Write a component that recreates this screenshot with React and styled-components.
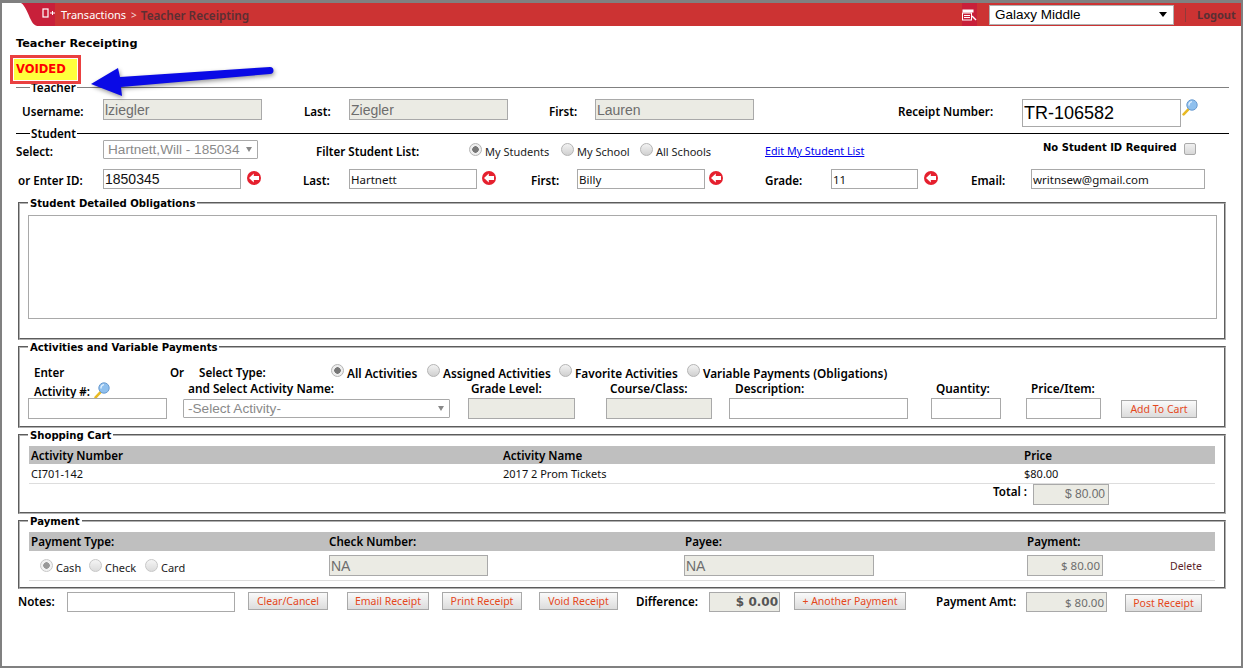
import React from "react";
import styled, { createGlobalStyle } from "styled-components";

const GlobalStyle = createGlobalStyle`
  html, body {
    margin: 0;
    padding: 0;
    background: #fff;
    font-family: "Noto Sans", "Open Sans", sans-serif;
    font-size: 11px;
    color: #000;
  }
`;

// small drawings
const BackArrow = () => (
  <ArrowIcon viewBox="0 0 14 14">
    <circle cx="7" cy="7" r="7" fill="#e5202e" />
    <path d="M2 7 L6.8 2.6 V5 H12 V9 H6.8 V11.4 Z" fill="#fff" />
  </ArrowIcon>
);

const Magnifier = () => (
  <MagIcon viewBox="0 0 16 17">
    <path d="M6.6 10.2 L1.6 15.4" stroke="#e8b923" strokeWidth="2.6" strokeLinecap="round" />
    <circle cx="10" cy="6" r="5.2" fill="#8fc0ee" stroke="#6a9bd0" strokeWidth="1" />
    <path d="M7 6.5 A3.4 3.4 0 0 1 10 2.6" stroke="#e4f2ff" strokeWidth="1.4" fill="none" />
  </MagIcon>
);

const Radio = ({ w, checked, disabled, children }) => (
  <RadioOption $w={w}>
    <RadioInput type="radio" defaultChecked={checked} disabled={disabled} />
    <span>{children}</span>
  </RadioOption>
);

export default function App() {
  return (
    <Frame>
      <GlobalStyle />
      <TopBar>
        <BarLeft>
          <Notch viewBox="0 0 52 23" preserveAspectRatio="none">
            <rect width="52" height="23" fill="#c8203a" />
            <path d="M0 0 H18 C22 2 25 11 28 17 C30 21 32 23 36 23 H0 Z" fill="#fff" />
            <rect x="40" y="6" width="5" height="8" fill="none" stroke="#fff" strokeWidth="1.2" />
            <path d="M47 10 H52 M49.5 8 V12" stroke="#fff" strokeWidth="1" />
          </Notch>
          <Crumb>Transactions</Crumb>
          <CrumbSep>&gt;</CrumbSep>
          <CrumbCurrent>Teacher Receipting</CrumbCurrent>
        </BarLeft>
        <BarRight>
          <ReportBlock>
            <svg viewBox="0 0 15 12" width="15" height="12">
              <rect x="0.5" y="0.5" width="11" height="3" fill="#fff" />
              <rect x="0.5" y="4" width="9" height="7" fill="none" stroke="#fff" />
              <path d="M2 6.5 H8 M2 8.5 H8" stroke="#fff" />
              <path d="M10 7 L14 11" stroke="#fff" strokeWidth="1.4" />
            </svg>
          </ReportBlock>
          <SchoolSelect>
            <span>Galaxy Middle</span>
            <SchoolCaret />
          </SchoolSelect>
          <BarDivider />
          <Logout>Logout</Logout>
        </BarRight>
      </TopBar>

      <Main>
        <PageTitle>Teacher Receipting</PageTitle>
        <Voided>VOIDED</Voided>
        <PointerArrow viewBox="0 0 190 36">
          <path
            d="M0 20 L27 4 L29 13 L179 3 A3.4 3.4 0 0 1 179 10 L30 23 L31 32 Z"
            fill="#0a0ae6"
          />
        </PointerArrow>

        <Section $color="#808080">
          <SectionLegend>Teacher</SectionLegend>
          <TeacherRow>
            <FieldLabel>Username:</FieldLabel>
            <TextInput $w={159} disabled readOnly value="lziegler" />
            <FieldLabel>Last:</FieldLabel>
            <TextInput $w={159} disabled readOnly value="Ziegler" />
            <FieldLabel>First:</FieldLabel>
            <TextInput $w={159} disabled readOnly value="Lauren" />
            <FieldLabel>Receipt Number:</FieldLabel>
            <ReceiptInput readOnly value="TR-106582" />
            <Magnifier />
          </TeacherRow>
        </Section>

        <Section $color="#000" $gap>
          <SectionLegend>Student</SectionLegend>
          <SelectRow>
            <FieldLabel>Select:</FieldLabel>
            <FakeSelect $w={155} $h={19}>
              <span>Hartnett,Will - 185034</span>
              <SmallCaret />
            </FakeSelect>
            <FieldLabel>Filter Student List:</FieldLabel>
            <RadioGroup>
              <Radio w={92} checked>My Students</Radio>
              <Radio w={79}>My School</Radio>
              <Radio>All Schools</Radio>
            </RadioGroup>
            <EditLink href="#">Edit My Student List</EditLink>
            <NoIdWrap>
              <NoIdLabel>No Student ID Required</NoIdLabel>
              <CheckBox type="checkbox" />
            </NoIdWrap>
          </SelectRow>
          <IdRow>
            <FieldLabel>or Enter ID:</FieldLabel>
            <PlainInput $w={138} $big readOnly value="1850345" />
            <BackArrow />
            <FieldLabel>Last:</FieldLabel>
            <PlainInput $w={128} readOnly value="Hartnett" />
            <BackArrow />
            <FieldLabel>First:</FieldLabel>
            <PlainInput $w={128} readOnly value="Billy" />
            <BackArrow />
            <FieldLabel>Grade:</FieldLabel>
            <PlainInput $w={87} readOnly value="11" />
            <BackArrow />
            <FieldLabel>Email:</FieldLabel>
            <PlainInput $w={174} readOnly value="writnsew@gmail.com" />
          </IdRow>
        </Section>

        <Panel $h={144} $mt={7}>
          <PanelLegend>Student Detailed Obligations</PanelLegend>
          <ObligationBox />
        </Panel>

        <Panel $h={88}>
          <PanelLegend>Activities and Variable Payments</PanelLegend>
          <TypeRow>
            <TypeLabel $w={142} $left={6}>Enter</TypeLabel>
            <TypeLabel $w={29}>Or</TypeLabel>
            <TypeLabel $w={132}>Select Type:</TypeLabel>
            <ActivityRadios>
              <Radio w={96} checked>All Activities</Radio>
              <Radio w={132}>Assigned Activities</Radio>
              <Radio w={128}>Favorite Activities</Radio>
              <Radio>Variable Payments (Obligations)</Radio>
            </ActivityRadios>
          </TypeRow>
          <ActivityLabels>
            <ActivityNum>
              <FieldLabel>Activity #:</FieldLabel>
              <Magnifier />
            </ActivityNum>
            <FieldLabel>and Select Activity Name:</FieldLabel>
            <FieldLabel>Grade Level:</FieldLabel>
            <FieldLabel>Course/Class:</FieldLabel>
            <FieldLabel>Description:</FieldLabel>
            <FieldLabel>Quantity:</FieldLabel>
            <FieldLabel>Price/Item:</FieldLabel>
          </ActivityLabels>
          <ActivityInputs>
            <PlainInput $w={139} $h={21} readOnly value="" />
            <FakeSelect $w={267} $h={19}>
              <span>-Select Activity-</span>
              <SmallCaret />
            </FakeSelect>
            <TextInput $w={107} $h={21} disabled readOnly value="" />
            <TextInput $w={106} $h={21} disabled readOnly value="" />
            <PlainInput $w={179} $h={21} readOnly value="" />
            <PlainInput $w={70} $h={21} readOnly value="" />
            <PlainInput $w={75} $h={21} readOnly value="" />
            <ActionButton $w={76}>Add To Cart</ActionButton>
          </ActivityInputs>
        </Panel>

        <Panel $h={86}>
          <PanelLegend>Shopping Cart</PanelLegend>
          <CartTable>
            <thead>
              <tr>
                <CartHead $w={472}>Activity Number</CartHead>
                <CartHead $w={521}>Activity Name</CartHead>
                <CartHead>Price</CartHead>
              </tr>
            </thead>
            <tbody>
              <tr>
                <CartCell>CI701-142</CartCell>
                <CartCell>2017 2 Prom Tickets</CartCell>
                <CartCell>$80.00</CartCell>
              </tr>
            </tbody>
          </CartTable>
          <TotalRow>
            <FieldLabel>Total :</FieldLabel>
            <AmountInput $w={76} disabled readOnly value="$ 80.00" />
          </TotalRow>
        </Panel>

        <Panel $h={75}>
          <PanelLegend>Payment</PanelLegend>
          <PayHeader>
            <span>Payment Type:</span>
            <span>Check Number:</span>
            <span>Payee:</span>
            <span>Payment:</span>
          </PayHeader>
          <PayRow>
            <PayRadios>
              <Radio w={49} checked disabled>Cash</Radio>
              <Radio w={56} disabled>Check</Radio>
              <Radio disabled>Card</Radio>
            </PayRadios>
            <TextInput $w={159} $h={21} disabled readOnly value="NA" />
            <TextInput $w={190} $h={21} disabled readOnly value="NA" />
            <SmallAmount $w={76} $h={21} disabled readOnly value="$ 80.00" />
            <DeleteLink>Delete</DeleteLink>
          </PayRow>
        </Panel>

        <BottomRow>
          <FieldLabel>Notes:</FieldLabel>
          <PlainInput $w={168} $h={20} readOnly value="" />
          <ActionButton $w={80}>Clear/Cancel</ActionButton>
          <ActionButton $w={82}>Email Receipt</ActionButton>
          <ActionButton $w={80}>Print Receipt</ActionButton>
          <ActionButton $w={79}>Void Receipt</ActionButton>
          <FieldLabel>Difference:</FieldLabel>
          <DiffInput disabled readOnly value="$ 0.00" />
          <ActionButton $w={112}>+ Another Payment</ActionButton>
          <FieldLabel>Payment Amt:</FieldLabel>
          <SmallAmount $w={81} $h={20} disabled readOnly value="$ 80.00" />
          <PostButton $w={77}>Post Receipt</PostButton>
        </BottomRow>
      </Main>
    </Frame>
  );
}

const Frame = styled.div`
  box-sizing: border-box;
  width: 1243px;
  height: 668px;
  border: solid #808080;
  border-width: 3px 2px 2px 2px;
  overflow: hidden;
  background: #fff;
`;

const TopBar = styled.div`
  height: 23px;
  margin-left: 1px;
  background: #cc3333;
  display: flex;
  justify-content: space-between;
  align-items: center;
`;

const BarLeft = styled.div`
  display: flex;
  align-items: center;
  height: 100%;
`;

const Notch = styled.svg`
  width: 52px;
  height: 23px;
  display: block;
`;

const Crumb = styled.span`
  margin-left: 6px;
  color: #fff;
  font-size: 11px;
`;

const CrumbSep = styled.span`
  margin: 0 4px 0 5px;
  color: #f4d9d9;
  font-size: 10px;
`;

const CrumbCurrent = styled.span`
  color: #5a2f33;
  font-size: 11.7px;
  font-weight: 600;
`;

const BarRight = styled.div`
  display: flex;
  align-items: center;
  height: 100%;
`;

const ReportBlock = styled.div`
  width: 15px;
  height: 100%;
  margin-right: 12px;
  background: #c8203a;
  display: flex;
  align-items: center;
  justify-content: center;
`;

const SchoolSelect = styled.div`
  box-sizing: border-box;
  width: 185px;
  height: 20px;
  padding: 0 6px 0 5px;
  background: #fff;
  border: 1px solid #b0b0b0;
  display: flex;
  align-items: center;
  justify-content: space-between;
  font-family: "Liberation Sans", Arial, sans-serif;
  font-size: 13.5px;
`;

const SchoolCaret = styled.i`
  border: 4px solid transparent;
  border-top: 5px solid #000;
  border-bottom: 0;
`;

const BarDivider = styled.i`
  width: 1px;
  height: 14px;
  margin: 0 11px;
  background: #8f3a3a;
`;

const Logout = styled.span`
  width: 44px;
  color: #5a2f33;
  font-size: 11px;
  font-weight: 700;
`;

const Main = styled.div`
  position: relative;
  padding: 0 12px 0 14px;
`;

const PageTitle = styled.div`
  height: 14px;
  margin-top: 10px;
  font-family: "DejaVu Sans", sans-serif;
  font-size: 11.3px;
  font-weight: 700;
  line-height: 16px;
`;

const Voided = styled.div`
  position: relative;
  z-index: 1;
  box-sizing: border-box;
  width: 71px;
  height: 29px;
  margin: 5px 0 -4px -6px;
  padding-left: 3px;
  border: 3px solid #ea4040;
  outline: 1px solid #fff;
  outline-offset: -4px;
  background: #ffff3c;
  color: #f00;
  font-family: "DejaVu Sans", sans-serif;
  font-size: 11.5px;
  font-weight: 700;
  line-height: 22px;
`;

const PointerArrow = styled.svg`
  position: absolute;
  z-index: 2;
  left: 89px;
  top: 28px;
  width: 190px;
  height: 36px;
  filter: drop-shadow(1px 2px 2px rgba(0, 0, 0, 0.4));
`;

const Section = styled.fieldset`
  min-width: 0;
  margin: ${(props) => (props.$gap ? "-1px" : "0")} 0 0;
  padding: 0;
  border: 0;
  border-top: 1px solid ${(props) => props.$color};
`;

const SectionLegend = styled.legend`
  margin-left: 14px;
  padding: 0 1px;
  font-size: 11.7px;
  font-weight: 600;
  line-height: 14px;
`;

const TeacherRow = styled.div`
  display: grid;
  grid-template-columns: 81px 201px 45px 200px 46px 303px 124px 160px 16px;
  align-items: start;
  margin: 5px 0 0 6px;
  & label {
    line-height: 25px;
  }
  & svg {
    margin-top: 0;
  }
`;

const SelectRow = styled.div`
  display: grid;
  grid-template-columns: 87px 213px 153px 296px 278px 1fr;
  align-items: center;
  & > label {
    padding-top: 3px;
  }
`;

const IdRow = styled.div`
  display: grid;
  grid-template-columns: 85px 144px 56px 46px 133px 49px 46px 132px 56px 66px 93px 47px 60px 174px;
  align-items: center;
  margin: 10px 0 0 2px;
  & > label {
    padding-top: 2px;
  }
`;

const FieldLabel = styled.label`
  font-size: 11.6px;
  font-weight: 600;
  white-space: nowrap;
`;

const inputBase = `
  box-sizing: border-box;
  padding: 0 1px;
  border: 1px solid #a9a9a9;
  outline: none;
  display: block;
`;

const TextInput = styled.input`
  ${inputBase}
  width: ${(props) => props.$w}px;
  height: ${(props) => props.$h || 21}px;
  background: #ebebe4;
  color: #6d6d6d;
  font-family: "Liberation Sans", Arial, sans-serif;
  font-size: 14px;
  &:disabled {
    color: #6d6d6d;
  }
`;

const PlainInput = styled.input`
  ${inputBase}
  width: ${(props) => props.$w}px;
  height: ${(props) => props.$h || 20}px;
  background: #fff;
  color: #111;
  font-family: ${(props) =>
    props.$big ? '"Liberation Sans", Arial, sans-serif' : '"Noto Sans", sans-serif'};
  font-size: ${(props) => (props.$big ? "14px" : "11.5px")};
`;

const ReceiptInput = styled.input`
  ${inputBase}
  width: 159px;
  height: 28px;
  background: #fff;
  color: #000;
  font-family: "Liberation Sans", Arial, sans-serif;
  font-size: 18px;
`;

const AmountInput = styled(TextInput)`
  padding-right: 3px;
  text-align: right;
  font-size: 12px;
`;

const SmallAmount = styled(TextInput)`
  padding-right: 2px;
  text-align: right;
  font-family: "Noto Sans", sans-serif;
  font-size: 11.5px;
`;

const DiffInput = styled(TextInput)`
  width: 71px;
  height: 20px;
  padding-right: 1px;
  text-align: right;
  font-family: "DejaVu Sans", sans-serif;
  font-size: 12px;
  font-weight: 700;
  &:disabled {
    color: #555;
  }
`;

const FakeSelect = styled.div`
  box-sizing: border-box;
  width: ${(props) => props.$w}px;
  height: ${(props) => props.$h}px;
  padding: 0 5px 0 4px;
  border: 1px solid #a9a9a9;
  border-radius: 1px;
  background: #fff;
  color: #8a8a8a;
  display: flex;
  align-items: center;
  justify-content: space-between;
  font-family: "Liberation Sans", Arial, sans-serif;
  font-size: 13.6px;
  white-space: nowrap;
`;

const SmallCaret = styled.i`
  border: 3px solid transparent;
  border-top: 5px solid #888;
  border-bottom: 0;
`;

const RadioGroup = styled.div`
  display: flex;
  align-items: center;
  margin-top: 3px;
`;

const RadioOption = styled.label`
  width: ${(props) => (props.$w ? `${props.$w}px` : "auto")};
  display: flex;
  align-items: center;
  gap: 3px;
  color: #222;
  font-size: 11px;
  white-space: nowrap;
`;

const RadioInput = styled.input`
  appearance: none;
  box-sizing: border-box;
  width: 13px;
  height: 13px;
  margin: -4px 0 0;
  flex: none;
  border: 1px solid #b4b4b4;
  border-radius: 50%;
  background: linear-gradient(#f2f2f2, #d0d0d0);
  &:checked {
    background: radial-gradient(circle, #777 0 3px, #eee 3.5px);
  }
  &:disabled {
    opacity: 0.75;
  }
`;

const EditLink = styled.a`
  padding-top: 3px;
  color: #0000ee;
  font-size: 10.7px;
`;

const NoIdWrap = styled.div`
  display: flex;
  align-items: center;
  gap: 7px;
  margin-top: -3px;
`;

const NoIdLabel = styled.span`
  margin-top: -2px;
  font-family: "DejaVu Sans", sans-serif;
  font-size: 10px;
  font-weight: 700;
  white-space: nowrap;
`;

const CheckBox = styled.input`
  appearance: none;
  width: 12px;
  height: 12px;
  margin: 2px 0 0;
  border: 1px solid #aaa;
  border-radius: 2px;
  background: linear-gradient(#f0f0f0, #d8d8d8);
`;

const ArrowIcon = styled.svg`
  display: block;
  width: 14px;
  height: 14px;
  margin-top: -2px;
`;

const MagIcon = styled.svg`
  display: block;
  width: 16px;
  height: 17px;
  margin-top: -5px;
`;

const Panel = styled.fieldset`
  box-sizing: border-box;
  min-width: 0;
  width: 1208px;
  height: ${(props) => props.$h}px;
  margin: ${(props) => props.$mt || 0}px 0 0 2px;
  padding: 0 8px;
  border: 2px groove #b0b0b0;
`;

const PanelLegend = styled.legend`
  height: 14px;
  margin-left: 0;
  padding: 0 2px;
  font-family: "DejaVu Sans", sans-serif;
  font-size: 10.1px;
  font-weight: 700;
  line-height: 16px;
  white-space: nowrap;
`;

const ObligationBox = styled.div`
  box-sizing: border-box;
  width: 1189px;
  height: 104px;
  margin-top: 5px;
  border: 1px solid #a9a9a9;
`;

const TypeRow = styled.div`
  display: flex;
  align-items: center;
  height: 14px;
  margin-top: 11px;
`;

const TypeLabel = styled.span`
  width: ${(props) => props.$w}px;
  padding-left: ${(props) => props.$left || 0}px;
  box-sizing: border-box;
  font-size: 11.6px;
  font-weight: 600;
`;

const ActivityRadios = styled.div`
  display: flex;
  align-items: center;
  & label {
    font-size: 11.8px;
    font-weight: 600;
    color: #000;
  }
  & span {
    padding-top: 2px;
  }
`;

const ActivityLabels = styled.div`
  display: grid;
  grid-template-columns: 154px 283px 139px 125px 201px 95px 1fr;
  align-items: start;
  height: 19px;
  margin-left: 6px;
  & > label {
    font-size: 11.8px;
    line-height: 18px;
  }
`;

const ActivityNum = styled.div`
  display: flex;
  align-items: flex-start;
  gap: 4px;
  height: 19px;
  & label {
    line-height: 25px;
  }
  & svg {
    margin-top: 3px;
  }
`;

const ActivityInputs = styled.div`
  display: grid;
  grid-template-columns: 155px 285px 138px 123px 202px 95px 95px 1fr;
  align-items: center;
`;

const ActionButton = styled.button`
  box-sizing: border-box;
  width: ${(props) => props.$w}px;
  height: 18px;
  padding: 0;
  border: 1px solid #a9a9a9;
  background: linear-gradient(#fafafa, #dcdcdc);
  color: #e4481c;
  font-family: "Noto Sans", sans-serif;
  font-size: 10.5px;
  white-space: nowrap;
`;

const PostButton = styled(ActionButton)`
  margin-top: 2px;
`;

const CartTable = styled.table`
  width: 1186px;
  margin: 4px 0 0 1px;
  border-collapse: collapse;
  table-layout: fixed;
`;

const CartHead = styled.th`
  width: ${(props) => (props.$w ? `${props.$w}px` : "auto")};
  height: 18px;
  padding: 1px 2px 0;
  box-sizing: border-box;
  background: #bfbfbf;
  font-size: 11.6px;
  font-weight: 600;
  line-height: 14px;
  text-align: left;
`;

const CartCell = styled.td`
  height: 19px;
  padding: 2px 2px 0;
  box-sizing: border-box;
  border-bottom: 1px solid #ddd;
  color: #111;
  font-size: 11px;
  line-height: 14px;
`;

const TotalRow = styled.div`
  display: flex;
  justify-content: flex-end;
  align-items: flex-start;
  gap: 6px;
  margin-right: 107px;
`;

const PayHeader = styled.div`
  display: grid;
  grid-template-columns: 298px 356px 342px 1fr;
  align-items: center;
  box-sizing: border-box;
  width: 1186px;
  height: 19px;
  margin: 4px 0 0 1px;
  padding-left: 2px;
  background: #bfbfbf;
  font-size: 11.6px;
  font-weight: 600;
`;

const PayRow = styled.div`
  display: grid;
  grid-template-columns: 300px 355px 343px 143px 1fr;
  align-items: center;
  box-sizing: border-box;
  width: 1186px;
  height: 30px;
  margin-left: 1px;
  border-bottom: 1px solid #ddd;
`;

const PayRadios = styled.div`
  display: flex;
  align-items: center;
  padding-left: 11px;
  margin-top: 3px;
`;

const DeleteLink = styled.span`
  color: #5a1f2a;
  font-size: 10.5px;
`;

const BottomRow = styled.div`
  display: grid;
  grid-template-columns: 49px 181px 99px 95px 97px 97px 73px 85px 142px 90px 99px 1fr;
  align-items: start;
  margin: 3px 0 0 2px;
  & > label {
    line-height: 20px;
  }
`;
